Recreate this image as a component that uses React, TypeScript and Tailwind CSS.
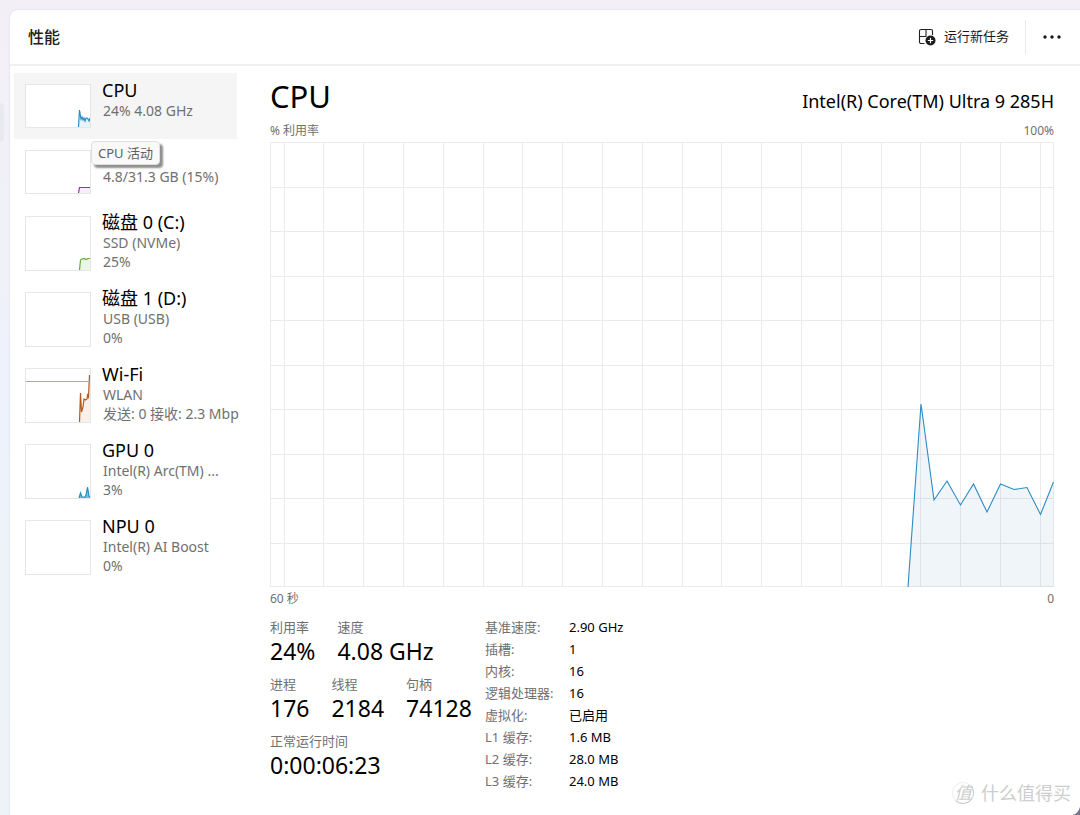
import React from 'react';

type Resource = {
  id: string;
  name: string;
  lines: string[];
  color: string;
  fill: string;
  points?: string;
  limitY?: number;
};

// Thumbnails use a 64 wide canvas, 42 high for one-line items and 53 high for the rest
const RESOURCES: Resource[] = [
  {
    id: 'cpu',
    name: 'CPU',
    lines: ['24% 4.08 GHz'],
    color: '#2b8cc4',
    fill: '#eaf3f9',
    points: '52.5,42 53.5,25 55,34 56,32 57,35 58,33 59,36 60,33 61,33 62,34 63,36 64,33',
  },
  {
    id: 'memory',
    name: '',
    lines: ['4.8/31.3 GB (15%)'],
    color: '#9b2fae',
    fill: '#f4f0f7',
    points: '52.5,42 53.5,36.5 64,36.5',
  },
  {
    id: 'disk0',
    name: '磁盘 0 (C:)',
    lines: ['SSD (NVMe)', '25%'],
    color: '#5fb030',
    fill: '#edf5e8',
    points: '53.5,53 54.5,43 56,42 58,41.5 60,42.5 62,41.5 64,41.5',
  },
  { id: 'disk1', name: '磁盘 1 (D:)', lines: ['USB (USB)', '0%'], color: '#5fb030', fill: '#edf5e8' },
  {
    id: 'wifi',
    name: 'Wi-Fi',
    lines: ['WLAN', '发送: 0 接收: 2.3 Mbp'],
    color: '#b4591a',
    fill: '#fcf1e9',
    points: '53.5,53 54.5,24 55.5,43 57,38 58,30 59.5,31 61,30 61.5,26 62.5,28 63.5,6',
    limitY: 12,
  },
  {
    id: 'gpu',
    name: 'GPU 0',
    lines: ['Intel(R) Arc(TM) ...', '3%'],
    color: '#2b8cc4',
    fill: '#7db9dc',
    points: '53,53 54.5,48 56,52 59,52 60,50 61.5,42 63,51 64,52',
  },
  { id: 'npu', name: 'NPU 0', lines: ['Intel(R) AI Boost', '0%'], color: '#2b8cc4', fill: '#eaf3f9' },
];

const STATS = [
  [
    { label: '利用率', value: '24%' },
    { label: '速度', value: '4.08 GHz' },
  ],
  [
    { label: '进程', value: '176' },
    { label: '线程', value: '2184' },
    { label: '句柄', value: '74128' },
  ],
  [{ label: '正常运行时间', value: '0:00:06:23' }],
];

const DETAILS = [
  ['基准速度:', '2.90 GHz'],
  ['插槽:', '1'],
  ['内核:', '16'],
  ['逻辑处理器:', '16'],
  ['虚拟化:', '已启用'],
  ['L1 缓存:', '1.6 MB'],
  ['L2 缓存:', '28.0 MB'],
  ['L3 缓存:', '24.0 MB'],
];

const USAGE = '638,445 651,262 664,358 677,339 690.5,363 703.5,342 717,370 730.5,342 744,347.5 757,345.5 770.5,372.5 783.5,340';

const Thumbnail: React.FC<{ item: Resource }> = ({ item }) => {
  const height = item.lines.length === 1 ? 42 : 53;
  return (
    <svg
      className={`w-[66px] shrink-0 border border-[#e6e6e6] bg-white ${height === 42 ? 'h-[44px]' : 'h-[55px]'}`}
      viewBox={`0 0 64 ${height}`}
      aria-hidden="true"
    >
      {item.points && (
        <>
          <polygon points={`${item.points} 64,${height}`} fill={item.fill} />
          <polyline points={item.points} fill="none" stroke={item.color} strokeWidth="1.2" />
        </>
      )}
      {item.limitY && <rect x="0" y={item.limitY} width="64" height="1" fill="#d99a66" />}
    </svg>
  );
};

const UsageChart: React.FC = () => (
  <svg className="block h-[445px] w-full" viewBox="0 0 784 445" preserveAspectRatio="none" role="img" aria-label="CPU 利用率">
    <g stroke="#ebebeb" shapeRendering="crispEdges">
      {Array.from({ length: 20 }, (_, i) => (
        <line key={i} x1={14.1 + i * 39.8} x2={14.1 + i * 39.8} y1="0" y2="445" />
      ))}
      {Array.from({ length: 9 }, (_, i) => (
        <line key={i} x1="0" x2="784" y1={(i + 1) * 44.5 + 0.6} y2={(i + 1) * 44.5 + 0.6} />
      ))}
      <rect x="0.5" y="0.5" width="783" height="444" fill="none" />
    </g>
    <polygon points={`${USAGE} 783.5,445`} fill="#1f6fb0" fillOpacity="0.07" />
    <polyline points={USAGE} fill="none" stroke="#2b8cc4" strokeWidth="1.1" />
  </svg>
);

const App: React.FC = () => {
  return (
    <div className="relative flex min-h-screen bg-gradient-to-b from-[#f3eff7] via-[#eef2fb] to-[#eef3f7] pt-[10px] font-['Noto_Sans','Noto_Sans_CJK_SC',sans-serif] text-black">
      <div className="w-[10px] shrink-0 pt-[93px]">
        <div className="h-[39px] w-1 rounded-r bg-[#e9e9f0]" />
      </div>

      <div className="flex min-w-0 flex-1 flex-col rounded-tl-lg bg-white shadow-[0_0_2px_#d5d5dc]">
        <header className="flex h-[56px] items-center border-b-2 border-[#f0f0f3] pr-4 pl-[18px]">
          <h1 className="flex-1 text-base font-medium text-[#202020]">性能</h1>
          <button className="flex items-center gap-2 pr-4 text-[13px] text-[#1a1a1a]">
            <svg className="h-[18px] w-[18px]" viewBox="0 0 18 18" fill="none" aria-hidden="true">
              <path
                d="M6.500 15.500H3A1.500 1.500 0 0 1 1.500 14V3A1.500 1.500 0 0 1 3 1.500H13A1.500 1.500 0 0 1 14.500 3V7M8 1.500V8.500M1.500 8.500H8.500"
                stroke="#222"
                strokeWidth="1.100"
              />
              <circle cx="12.500" cy="12.500" r="5" fill="#1a1a1a" />
              <path d="M12.500 9.800V15.200M9.800 12.500H15.200" stroke="white" strokeWidth="1.200" />
            </svg>
            运行新任务
          </button>
          <div className="h-[34px] w-px bg-[#e8e8e8]" />
          <button className="ml-[14px] flex w-6 justify-center" aria-label="更多选项">
            <svg className="h-1 w-[18px]" viewBox="0 0 18 4" fill="#1a1a1a" aria-hidden="true">
              <circle cx="2" cy="2" r="1.700" />
              <circle cx="9" cy="2" r="1.700" />
              <circle cx="16" cy="2" r="1.700" />
            </svg>
          </button>
        </header>

        <div className="flex flex-1">
          <nav className="w-[232px] shrink-0 pt-[7px] pl-1">
            {RESOURCES.map((item, index) => (
              <div key={item.id} className="relative">
                <button
                  className={`flex w-[223px] gap-[11px] pl-[11px] text-left whitespace-nowrap ${item.lines.length === 1 ? 'h-[66px]' : 'h-[76px]'} ${index === 0 ? 'bg-[#f5f5f5]' : ''}`}
                >
                  <span className="flex pt-[11px]">
                    <Thumbnail item={item} />
                  </span>
                  <span className="block pt-[6px]">
                    <span className="block h-[22px] text-[18px] leading-[23px]">{item.name}</span>
                    {item.lines.map(line => (
                      <span key={line} className="block pl-px text-[14px] leading-[19px] text-[#707070]">
                        {line}
                      </span>
                    ))}
                  </span>
                </button>
                {index === 0 && (
                  <div
                    role="tooltip"
                    className="absolute top-[68px] left-[77px] z-10 rounded border border-[#dedede] bg-[#f9f9f9] px-[6px] text-[13px] leading-[22px] text-[#606060] shadow-[3px_3px_2px_#909090]"
                  >
                    CPU 活动
                  </div>
                )}
              </div>
            ))}
          </nav>

          <main className="min-w-0 flex-1 pt-[10px] pr-[26px] pl-[28px]">
            <div className="flex items-baseline justify-between">
              <h2 className="text-[31px] leading-[40px]">CPU</h2>
              <span className="text-[18px]">Intel(R) Core(TM) Ultra 9 285H</span>
            </div>
            <div className="mt-[6px] flex justify-between pb-[2px] text-xs leading-[18px] text-[#707070]">
              <span>% 利用率</span>
              <span>100%</span>
            </div>
            <UsageChart />
            <div className="flex justify-between pt-[3px] text-xs leading-[18px] text-[#707070]">
              <span>60 秒</span>
              <span>0</span>
            </div>

            <div className="mt-2 flex">
              <div className="flex w-[215px] shrink-0 flex-col gap-[9px] pt-px">
                {STATS.map(row => (
                  <dl key={row[0].label} className="flex gap-[22px] whitespace-nowrap">
                    {row.map(stat => (
                      <div key={stat.label}>
                        <dt className="text-[13px] leading-[20px] text-[#707070]">{stat.label}</dt>
                        <dd className="text-[23px] leading-[28px]">{stat.value}</dd>
                      </div>
                    ))}
                  </dl>
                ))}
              </div>
              <dl className="text-[13px] leading-[22px]">
                {DETAILS.map(([label, value]) => (
                  <div key={label} className="flex">
                    <dt className="w-[84px] text-[#707070]">{label}</dt>
                    <dd>{value}</dd>
                  </div>
                ))}
              </dl>
            </div>
          </main>
        </div>
      </div>

      <div className="absolute right-[9px] bottom-[10px] flex items-center gap-[7px] text-[#cdcdcd]">
        <span className="flex h-[22px] w-[22px] items-center justify-center rounded-full border border-t-[#f0f0f0] border-r-[#cdcdcd] border-b-[#cdcdcd] border-l-[#f0f0f0] text-[17px] italic">
          值
        </span>
        <span className="text-[18px] leading-6">什么值得买</span>
      </div>
      <svg className="absolute right-0 bottom-0 h-2 w-2" viewBox="0 0 8 8" aria-hidden="true">
        <path d="M8 0V8H0Q6 7 8 0Z" fill="#77758a" />
      </svg>
    </div>
  );
};

export default App;
